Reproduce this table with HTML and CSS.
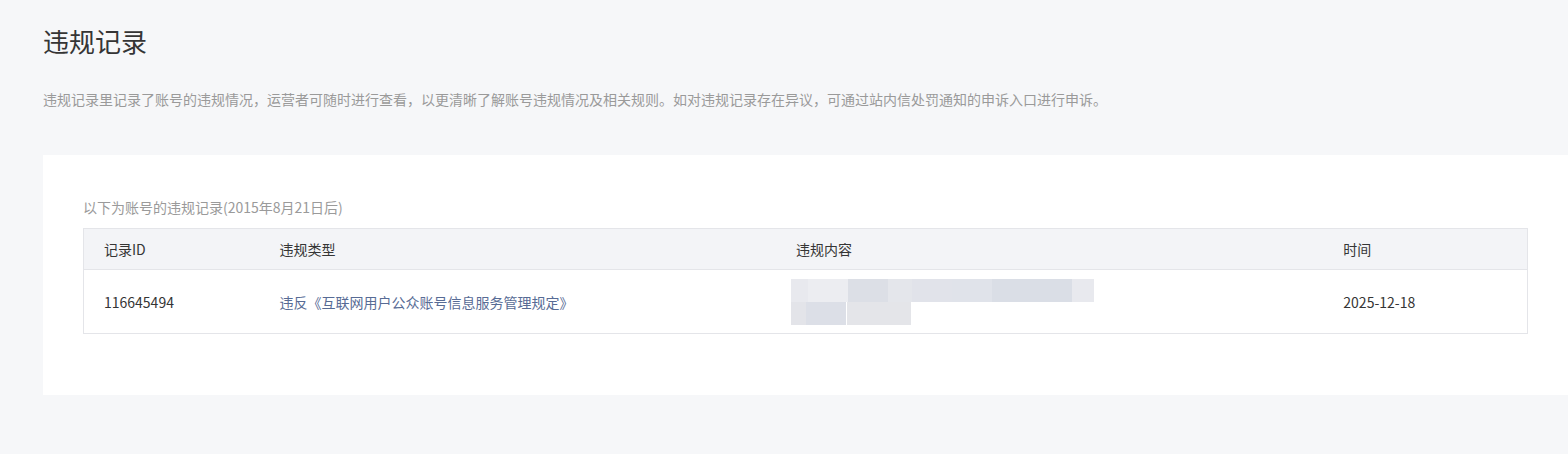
FILE: index.html
```html
<!DOCTYPE html>
<html lang="zh-CN">
<head>
<meta charset="utf-8">
<title>违规记录</title>
<link rel="stylesheet" href="styles.css">
</head>
<body>
<div class="page">
  <h1 class="title">违规记录</h1>
  <p class="desc">违规记录里记录了账号的违规情况，运营者可随时进行查看，以更清晰了解账号违规情况及相关规则。如对违规记录存在异议，可通过站内信处罚通知的申诉入口进行申诉。</p>
  <div class="card">
    <p class="sub">以下为账号的违规记录(2015年8月21日后)</p>
    <table class="tbl">
      <colgroup>
        <col class="c1"><col class="c2"><col class="c3"><col class="c4">
      </colgroup>
      <thead>
        <tr><th>记录ID</th><th>违规类型</th><th>违规内容</th><th>时间</th></tr>
      </thead>
      <tbody>
        <tr>
          <td>116645494</td>
          <td><a class="link">违反《互联网用户公众账号信息服务管理规定》</a></td>
          <td>
            <div class="blur">
              <div class="bl-row">
                <span class="b" style="width:17px;background:#e8e9ee"></span>
                <span class="b" style="width:40px;background:#ecedf1"></span>
                <span class="b" style="width:40px;background:#dcdfe6"></span>
                <span class="b" style="width:24px;background:#e4e6eb"></span>
                <span class="b" style="width:40px;background:#e1e3ea"></span>
                <span class="b" style="width:40px;background:#e0e3ea"></span>
                <span class="b" style="width:80px;background:#dadee6"></span>
                <span class="b" style="width:22px;background:#e8e9ee"></span>
              </div>
              <div class="bl-row">
                <span class="b" style="width:15px;background:#e3e4e9"></span>
                <span class="b" style="width:40px;background:#dcdfe7"></span>
                <span class="b" style="width:1px;background:#ffffff"></span>
                <span class="b" style="width:64px;background:#e4e5e9"></span>
              </div>
            </div>
          </td>
          <td>2025-12-18</td>
        </tr>
      </tbody>
    </table>
  </div>
</div>
</body>
</html>
```
FILE: styles.css
```css
html, body {
  margin: 0;
  padding: 0;
}
body {
  background: #f6f7f9;
  font-family: "Noto Sans CJK SC", "Noto Sans", sans-serif;
  color: #353535;
  width: 1568px;
  height: 454px;
  overflow: hidden;
}
.page {
  padding: 23px 0 0 43px;
}
.title {
  margin: 0;
  font-size: 26px;
  font-weight: 400;
  line-height: 36px;
  color: #353535;
}
.desc {
  margin: 0;
  padding-top: 28px;
  font-size: 14px;
  line-height: 24px;
  color: #9a9a9a;
}
.card {
  margin-top: 44px;
  background: #fff;
  padding: 42px 40px 61px 40px;
}
.sub {
  margin: 0 0 11px 0;
  font-size: 14px;
  line-height: 20px;
  color: #9a9a9a;
}
.tbl {
  width: 1445px;
  border-collapse: collapse;
  table-layout: fixed;
  font-size: 14px;
  border: 1px solid #e4e5e9;
}
.c1 { width: 176px; }
.c2 { width: 516px; }
.c3 { width: 547px; }
.c4 { width: 204px; }
.tbl th {
  background: #f3f4f7;
  font-weight: 400;
  text-align: left;
  height: 40px;
  padding: 0 20px;
  line-height: 20px;
  border-bottom: 1px solid #e4e5e9;
  color: #353535;
}
.tbl td {
  height: 63px;
  padding: 0 20px;
  line-height: 20px;
  color: #353535;
  vertical-align: middle;
}
.link {
  color: #576b95;
  text-decoration: none;
}
.blur {
  margin-left: -5px;
  display: flex;
  flex-direction: column;
}
.bl-row {
  display: flex;
  height: 23px;
}
.b {
  display: block;
  height: 23px;
}
```
